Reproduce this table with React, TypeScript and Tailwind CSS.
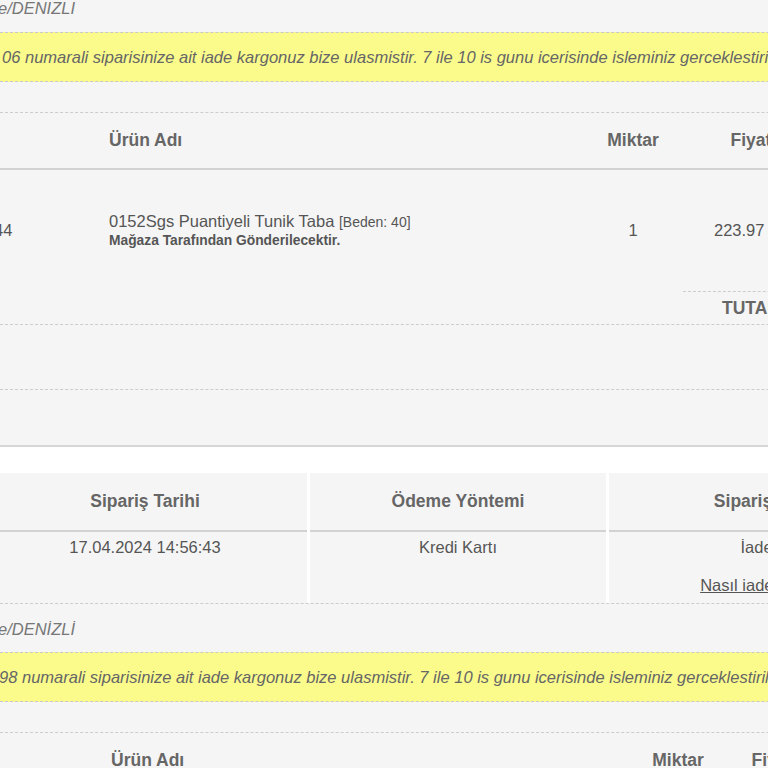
import React from 'react';

const notice = 'numarali siparisinize ait iade kargonuz bize ulasmistir. 7 ile 10 is gunu icerisinde isleminiz gerceklestirilecektir.';

function Address({ text }: { text: string }) {
  return (
    <div className="h-[18px] leading-[18px] text-[16.5px] italic text-[#777] whitespace-nowrap">
      <span className="-ml-[2px]">{text}</span>
    </div>
  );
}

function Notice({ no, shift }: { no: string; shift: string }) {
  return (
    <div className="h-[50px] border-y border-dashed border-[#c8c8c8] bg-[#fbfb8c] flex items-center whitespace-nowrap text-[16.5px] italic text-[#666]">
      <span className={shift}>{no} {notice}</span>
    </div>
  );
}

export default function App() {
  return (
    <div className="w-[768px] h-[768px] overflow-hidden bg-[#f5f5f5] font-['Liberation_Sans',Arial,sans-serif] text-[#555]">
      <div className="w-[1000px]">
        {/* order 1 */}
        <div className="-mt-[1px]">
          <Address text="e/DENIZLI" />
        </div>
        <div className="mt-[15px]">
          <Notice no="06" shift="ml-[2px]" />
        </div>

        <div className="mt-[30px]">
          <div className="border-t border-dashed border-[#cccccc]">
            <div className="h-[57px] flex items-center border-b-2 border-[#d2d2d2] text-[17.5px] font-bold text-[#666]">
              <div className="w-[100px]" />
              <div className="w-[483px] pl-[9px]">Ürün Adı</div>
              <div className="w-[100px] text-center">Miktar</div>
              <div className="w-[136px] text-center">Fiyat</div>
            </div>
          </div>

          <div className="h-[121px] flex items-center text-[16.5px]">
            <div className="w-[100px] whitespace-nowrap">
              <span className="-ml-[6px]">44</span>
            </div>
            <div className="w-[483px] pl-[9px]">
              <div className="leading-[19px] whitespace-nowrap">
                0152Sgs Puantiyeli Tunik Taba <span className="text-[14px]">[Beden: 40]</span>
              </div>
              <div className="leading-[17px] text-[13.8px] font-bold">Mağaza Tarafından Gönderilecektir.</div>
            </div>
            <div className="w-[100px] text-center">1</div>
            <div className="w-[136px] text-center whitespace-nowrap">223.97 TL</div>
          </div>

          <div className="h-[34px] flex border-b border-dashed border-[#cccccc]">
            <div className="w-[683px]" />
            <div className="flex-1 border-t border-dashed border-[#cccccc]">
              <div className="w-[136px] h-full flex items-center justify-center text-[17.5px] font-bold text-[#666]">
                TUTAR
              </div>
            </div>
          </div>
          <div className="h-[65px] border-b border-dashed border-[#cccccc]" />
          <div className="h-[57px] border-b-2 border-[#d6d6d6]" />
        </div>

        <div className="h-[26px] bg-white" />

        <div className="flex border-b border-dashed border-[#cccccc] text-[16.5px]">
          <div className="w-[327px] -ml-[17px] border-r-[3px] border-white flex flex-col">
            <div className="h-[59px] flex items-center justify-center border-b-2 border-[#d2d2d2] text-[17.5px] font-bold text-[#666]">
              Sipariş Tarihi
            </div>
            <div className="h-[71px] pt-[5px] text-center leading-[20px]">17.04.2024 14:56:43</div>
          </div>
          <div className="w-[299px] border-r-[3px] border-white flex flex-col">
            <div className="h-[59px] flex items-center justify-center border-b-2 border-[#d2d2d2] text-[17.5px] font-bold text-[#666]">
              Ödeme Yöntemi
            </div>
            <div className="h-[71px] pt-[5px] text-center leading-[20px]">Kredi Kartı</div>
          </div>
          <div className="w-[340px] flex flex-col">
            <div className="h-[59px] flex items-center justify-center border-b-2 border-[#d2d2d2] text-[17.5px] font-bold text-[#666] whitespace-nowrap">
              Sipariş Durumu
            </div>
            <div className="h-[71px] pt-[5px] text-center leading-[20px] whitespace-nowrap">
              <div>İade Edildi</div>
              <div className="mt-[18px]">
                <a href="#" className="underline text-[#555]">Nasıl iade edebilirim?</a>
              </div>
            </div>
          </div>
        </div>

        {/* order 2 */}
        <div className="mt-[16px]">
          <Address text="e/DENİZLİ" />
        </div>
        <div className="mt-[14px]">
          <Notice no="98" shift="-ml-[1px]" />
        </div>

        <div className="mt-[30px]">
          <div className="border-t border-dashed border-[#cccccc]">
            <div className="h-[57px] flex items-center border-b-2 border-[#d2d2d2] text-[17.5px] font-bold text-[#666]">
              <div className="w-[102px]" />
              <div className="w-[526px] pl-[9px]">Ürün Adı</div>
              <div className="w-[100px] text-center">Miktar</div>
              <div className="w-[88px] text-center">Fiyat</div>
            </div>
          </div>
        </div>
      </div>
    </div>
  );
}
